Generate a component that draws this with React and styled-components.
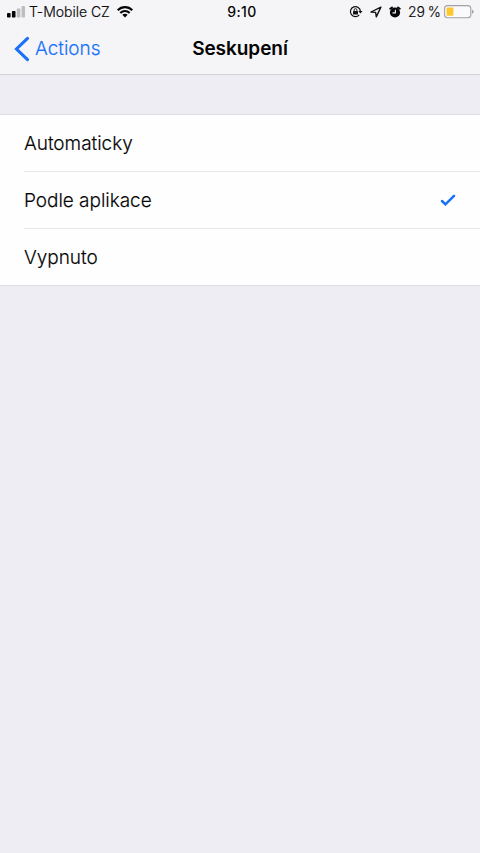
import React from "react";
import styled, { createGlobalStyle } from "styled-components";

const GlobalStyle = createGlobalStyle`
  * { box-sizing: border-box; }
  body {
    margin: 0;
    background: #eeedf3;
    font-family: Inter, "Liberation Sans", sans-serif;
    color: #050505;
  }
`;

const Screen = styled.main`
  width: 100%;
  min-height: 853px;
  background: #eeedf3;
`;

const Header = styled.header`
  height: 75px;
  background: #f5f4f7;
  border-bottom: 1px solid #d3d2d7;
`;

const StatusBar = styled.div`
  display: grid;
  grid-template-columns: 1fr auto 1fr;
  height: 24px;
  padding: 0 6px 0 7px;
  align-items: center;
  font-size: 14px;
  line-height: 24px;
`;

const StatusGroup = styled.div`
  display: flex;
  align-items: center;
  justify-content: ${(p) => (p.$end ? "flex-end" : "flex-start")};
  svg { display: block; flex: none; }
`;

const Carrier = styled.span`
  margin: 0 7px 0 4px;
  font-size: 14px;
  font-weight: 350;
  letter-spacing: -0.02px;
  -webkit-text-stroke: 0.15px currentColor;
  white-space: nowrap;
`;

const Clock = styled.span`
  font-size: 14px;
  font-weight: 500;
  letter-spacing: 0.4px;
  margin-left: 3px;
`;

const Battery = styled.span`
  margin: 0 3px 0 7px;
  font-size: 14px;
  font-weight: 350;
  letter-spacing: 0;
  word-spacing: -1px;
  -webkit-text-stroke: 0.15px currentColor;
  white-space: nowrap;
`;

const StatusIcon = styled.svg`
  margin-right: ${(p) => p.$gap || 0}px;
`;

const NavBar = styled.nav`
  display: grid;
  grid-template-columns: 1fr auto 1fr;
  height: 50px;
  padding: 0 14px;
  align-items: center;
`;

const BackButton = styled.button`
  display: flex;
  align-items: center;
  gap: 5px;
  padding: 0;
  border: 0;
  background: none;
  color: #1871f8;
  font: 350 19px/50px Inter, sans-serif;
  letter-spacing: -0.03px;
  -webkit-text-stroke: 0.15px currentColor;
  svg { display: block; }
`;

const Title = styled.h1`
  margin: 0;
  font-size: 19px;
  font-weight: 570;
  line-height: 50px;
  letter-spacing: -0.05px;
`;

const Options = styled.ul`
  list-style: none;
  margin: 39px 0 0;
  padding: 0 0 0 24px;
  background: #fefefe;
  border-top: 1px solid #dcdbe0;
  border-bottom: 1px solid #dcdbe0;
`;

const Option = styled.li`
  display: flex;
  align-items: center;
  justify-content: space-between;
  height: ${(p) => (p.$last ? 56 : 57)}px;
  padding-right: 24px;
  border-bottom: ${(p) => (p.$last ? "none" : "1px solid #e7e7e9")};
  font-size: 19px;
  font-weight: 350;
  letter-spacing: -0.04px;
  -webkit-text-stroke: 0.15px currentColor;
`;

const options = [
  { label: "Automaticky" },
  { label: "Podle aplikace", selected: true },
  { label: "Vypnuto" },
];

function Signal() {
  return (
    <svg width="18" height="12" viewBox="0 0 18 12">
      <rect x="0" y="7" width="3.6" height="4.5" rx="0.8" fill="#050505" />
      <rect x="4.9" y="5" width="3.6" height="6.5" rx="0.8" fill="#050505" />
      <rect x="9.8" y="2.5" width="3.6" height="9" rx="0.8" fill="#bdbcbf" />
      <rect x="14.6" y="0" width="3.4" height="11.5" rx="0.8" fill="#bdbcbf" />
    </svg>
  );
}

function Wifi() {
  return (
    <svg width="16" height="12" viewBox="0 0 16 12">
      <g fill="none" stroke="#050505" strokeWidth="2.1">
        <path d="M.7 4.3C4.8.1 11.2.1 15.3 4.3" />
        <path d="M3.3 7C6 4.4 10 4.4 12.7 7" />
      </g>
      <path d="M5.3 8.8C6.9 7.5 9.1 7.5 10.7 8.8L8 11.5Z" fill="#050505" />
    </svg>
  );
}

function RotationLock() {
  return (
    <StatusIcon $gap={7} width="14" height="14" viewBox="0 0 14 14">
      <path d="M11.4 6.4A5 5 0 1 0 10.2 9.9" fill="none" stroke="#111" strokeWidth="1.2" />
      <path d="M9.3 6.1H13.5L11.4 8.6Z" fill="#111" />
      <rect x="4" y="6" width="5" height="3.5" rx="0.4" fill="#111" />
      <path d="M5.1 6.2V5A1.4 1.4 0 0 1 7.9 5V6.2" fill="none" stroke="#111" strokeWidth="0.9" />
    </StatusIcon>
  );
}

function Location() {
  return (
    <StatusIcon $gap={7} width="12" height="12" viewBox="0 0 12 12">
      <path d="M1 6L10.9 1.1L6.3 10.9L5.6 6.4Z" fill="none" stroke="#111" strokeWidth="1.35" strokeLinejoin="round" />
    </StatusIcon>
  );
}

function Alarm() {
  return (
    <StatusIcon width="12" height="13" viewBox="0 0 12 13">
      <circle cx="6" cy="6.5" r="5.1" fill="#050505" />
      <path d="M1.2 2.7L3 1.4M9 1.4L10.8 2.7" stroke="#050505" strokeWidth="1.8" strokeLinecap="round" />
      <path d="M6.4 3.8V6.9H3.5" fill="none" stroke="#f5f4f7" strokeWidth="1.1" />
    </StatusIcon>
  );
}

function BatteryIcon() {
  return (
    <svg width="30" height="14" viewBox="0 0 30 14">
      <rect x="0.6" y="0.6" width="26.2" height="12.2" rx="3" fill="#faf9fb" stroke="#a2a1a5" strokeWidth="1.1" />
      <rect x="2.6" y="2.6" width="6.8" height="8.2" rx="0.8" fill="#fdc82c" />
      <path d="M28 4.7C30.1 5.2 30.1 8.3 28 8.8Z" fill="#a2a1a5" />
    </svg>
  );
}

export default function App() {
  return (
    <Screen>
      <GlobalStyle />
      <Header>
        <StatusBar>
          <StatusGroup>
            <Signal />
            <Carrier>T-Mobile CZ</Carrier>
            <Wifi />
          </StatusGroup>
          <Clock>9:10</Clock>
          <StatusGroup $end>
            <RotationLock />
            <Location />
            <Alarm />
            <Battery>29 %</Battery>
            <BatteryIcon />
          </StatusGroup>
        </StatusBar>
        <NavBar>
          <BackButton type="button">
            <svg width="16" height="26" viewBox="0 0 16 26">
              <path d="M13.5 2.3L2.5 13L13.5 23.7" fill="none" stroke="#1871f8" strokeWidth="3.1" strokeLinecap="round" strokeLinejoin="miter" />
            </svg>
            Actions
          </BackButton>
          <Title>Seskupení</Title>
        </NavBar>
      </Header>
      <Options>
        {options.map((option, index) => (
          <Option key={option.label} $last={index === options.length - 1}>
            {option.label}
            {option.selected && (
              <svg width="16" height="12" viewBox="0 0 16 12" aria-label="Selected">
                <path d="M2 7L5.4 10.3L14 1.8" fill="none" stroke="#1871f8" strokeWidth="2.5" strokeLinecap="round" />
              </svg>
            )}
          </Option>
        ))}
      </Options>
    </Screen>
  );
}
